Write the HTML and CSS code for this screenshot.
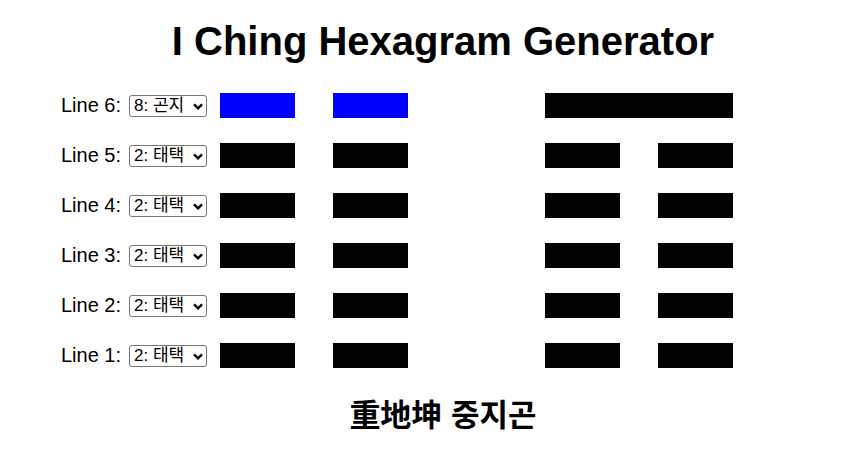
FILE: index.html
```html
<!DOCTYPE html>
<html lang="ko">
<head>
<meta charset="utf-8">
<title>I Ching Hexagram Generator</title>
<link rel="stylesheet" href="styles.css">
</head>
<body>
<div class="page">
  <h1 class="title">I Ching Hexagram Generator</h1>
  <div class="rows">
    <div class="row">
      <label class="label">Line 6:</label>
      <span class="selwrap"><select class="sel"><option>1: 건천</option><option>2: 태택</option><option>3: 이화</option><option>4: 진뢰</option><option>5: 손풍</option><option>6: 감수</option><option>7: 간산</option><option selected>8: 곤지</option></select><svg class="chev" width="10" height="7" viewBox="0 0 10 7"><path d="M1 1.3 L5 5.3 L9 1.3" fill="none" stroke="#000" stroke-width="2.4"/></svg></span>
      <div class="hex"><div class="bar blue"></div><div class="bar blue"></div></div>
      <div class="hex right"><div class="bar full"></div></div>
    </div>
    <div class="row">
      <label class="label">Line 5:</label>
      <span class="selwrap"><select class="sel"><option>1: 건천</option><option selected>2: 태택</option><option>3: 이화</option><option>4: 진뢰</option><option>5: 손풍</option><option>6: 감수</option><option>7: 간산</option><option>8: 곤지</option></select><svg class="chev" width="10" height="7" viewBox="0 0 10 7"><path d="M1 1.3 L5 5.3 L9 1.3" fill="none" stroke="#000" stroke-width="2.4"/></svg></span>
      <div class="hex"><div class="bar"></div><div class="bar"></div></div>
      <div class="hex right"><div class="bar"></div><div class="bar"></div></div>
    </div>
    <div class="row">
      <label class="label">Line 4:</label>
      <span class="selwrap"><select class="sel"><option>1: 건천</option><option selected>2: 태택</option><option>3: 이화</option><option>4: 진뢰</option><option>5: 손풍</option><option>6: 감수</option><option>7: 간산</option><option>8: 곤지</option></select><svg class="chev" width="10" height="7" viewBox="0 0 10 7"><path d="M1 1.3 L5 5.3 L9 1.3" fill="none" stroke="#000" stroke-width="2.4"/></svg></span>
      <div class="hex"><div class="bar"></div><div class="bar"></div></div>
      <div class="hex right"><div class="bar"></div><div class="bar"></div></div>
    </div>
    <div class="row">
      <label class="label">Line 3:</label>
      <span class="selwrap"><select class="sel"><option>1: 건천</option><option selected>2: 태택</option><option>3: 이화</option><option>4: 진뢰</option><option>5: 손풍</option><option>6: 감수</option><option>7: 간산</option><option>8: 곤지</option></select><svg class="chev" width="10" height="7" viewBox="0 0 10 7"><path d="M1 1.3 L5 5.3 L9 1.3" fill="none" stroke="#000" stroke-width="2.4"/></svg></span>
      <div class="hex"><div class="bar"></div><div class="bar"></div></div>
      <div class="hex right"><div class="bar"></div><div class="bar"></div></div>
    </div>
    <div class="row">
      <label class="label">Line 2:</label>
      <span class="selwrap"><select class="sel"><option>1: 건천</option><option selected>2: 태택</option><option>3: 이화</option><option>4: 진뢰</option><option>5: 손풍</option><option>6: 감수</option><option>7: 간산</option><option>8: 곤지</option></select><svg class="chev" width="10" height="7" viewBox="0 0 10 7"><path d="M1 1.3 L5 5.3 L9 1.3" fill="none" stroke="#000" stroke-width="2.4"/></svg></span>
      <div class="hex"><div class="bar"></div><div class="bar"></div></div>
      <div class="hex right"><div class="bar"></div><div class="bar"></div></div>
    </div>
    <div class="row">
      <label class="label">Line 1:</label>
      <span class="selwrap"><select class="sel"><option>1: 건천</option><option selected>2: 태택</option><option>3: 이화</option><option>4: 진뢰</option><option>5: 손풍</option><option>6: 감수</option><option>7: 간산</option><option>8: 곤지</option></select><svg class="chev" width="10" height="7" viewBox="0 0 10 7"><path d="M1 1.3 L5 5.3 L9 1.3" fill="none" stroke="#000" stroke-width="2.4"/></svg></span>
      <div class="hex"><div class="bar"></div><div class="bar"></div></div>
      <div class="hex right"><div class="bar"></div><div class="bar"></div></div>
    </div>
  </div>
  <h2 class="result">重地坤 중지곤</h2>
</div>
</body>
</html>
```
FILE: styles.css
```css
html, body {
  margin: 0;
  padding: 0;
  background: #ffffff;
}
body {
  font-family: "Liberation Sans", Arial, "Noto Sans CJK KR", sans-serif;
  color: #000000;
}
.page {
  padding-left: 44px;
  padding-top: 19px;
}
.title {
  margin: 0 0 29px 0;
  font-size: 40px;
  font-weight: bold;
  text-align: center;
}
.rows {
  display: flex;
  flex-direction: column;
  gap: 25px;
  padding-left: 17px;
}
.row {
  display: flex;
  align-items: center;
  height: 25px;
}
.label {
  font-size: 20px;
  margin-right: 8px;
  white-space: nowrap;
}
.selwrap {
  position: relative;
  display: flex;
  margin-right: 13px;
}
.sel {
  -webkit-appearance: none;
  appearance: none;
  box-sizing: border-box;
  width: 78px;
  height: 22px;
  margin: 0;
  padding: 0 0 0 4px;
  border: 1px solid #767676;
  border-radius: 3px;
  background: #ffffff;
  color: #000000;
  font-size: 17px;
  line-height: 20px;
  font-family: "Liberation Sans", Arial, "Noto Sans CJK KR", sans-serif;
}
.chev {
  position: absolute;
  right: 4px;
  top: 8px;
  pointer-events: none;
}
.hex {
  display: flex;
  gap: 38px;
  width: 188px;
}
.hex.right {
  margin-left: 137px;
}
.bar {
  width: 75px;
  height: 25px;
  background: #000000;
}
.bar.blue {
  background: #0000ff;
}
.bar.full {
  width: 188px;
}
.result {
  margin: 22px 0 0 0;
  font-family: "Noto Sans CJK KR", "Noto Sans CJK SC", sans-serif;
  font-size: 31px;
  font-weight: bold;
  text-align: center;
}
```
